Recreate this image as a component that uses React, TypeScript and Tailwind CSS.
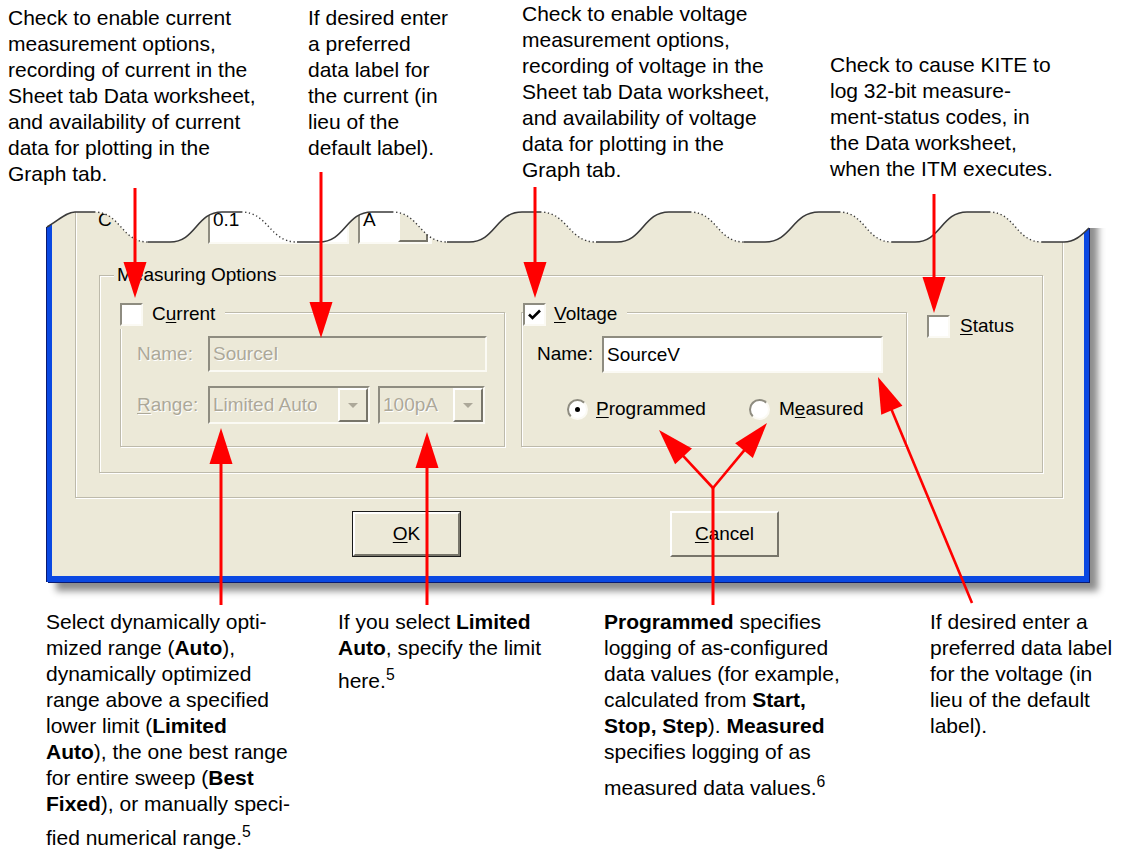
import React from "react";

const sunken =
  "border-2 border-t-[#8e8c80] border-l-[#8e8c80] border-b-[#fbfaf4] border-r-[#fbfaf4]";
const etched = "border border-[#bdbaab] shadow-[inset_1px_1px_0_#ffffff,1px_1px_0_#ffffff]";
const raised =
  "border-2 border-t-[#ffffff] border-l-[#ffffff] border-b-[#77756a] border-r-[#77756a]";
const dim = "text-[#aca899] [text-shadow:1px_1px_0_#ffffff]";

function Note({ className, children }: { className: string; children: React.ReactNode }) {
  return <div className={`whitespace-nowrap text-[21px] leading-[26px] ${className}`}>{children}</div>;
}

function Check({ on }: { on?: boolean }) {
  return (
    <div className={`w-[23px] h-[23px] bg-white flex items-center justify-center ${sunken}`}>
      {on && (
        <svg width="15" height="15" viewBox="0 0 15 15">
          <path d="M2 7.5 L5.5 11 L13 3.5" fill="none" stroke="#000" strokeWidth="2.6" />
        </svg>
      )}
    </div>
  );
}

function Radio({ on }: { on?: boolean }) {
  return (
    <div className={`w-[21px] h-[21px] rounded-full bg-white flex items-center justify-center ${sunken}`}>
      {on && <div className="w-[5px] h-[5px] rounded-full bg-black" />}
    </div>
  );
}

function DropButton({ arrow = true }: { arrow?: boolean }) {
  return (
    <div className={`w-[30px] h-full bg-[#ece9d8] flex items-center justify-center ${raised}`}>
      {arrow && (
        <div className="w-0 h-0 border-l-[5px] border-r-[5px] border-t-[5px] border-l-transparent border-r-transparent border-t-[#aca899]" />
      )}
    </div>
  );
}

function Combo({ value, className }: { value: string; className: string }) {
  return (
    <div className={`flex h-[38px] bg-[#ece9d8] ${sunken} ${className}`}>
      <div className={`flex-1 pl-[3px] text-[19px] leading-[34px] ${dim}`}>{value}</div>
      <DropButton />
    </div>
  );
}

function Arrow({ x1, y1, x2, y2, w = 3 }: { x1: number; y1: number; x2: number; y2: number; w?: number }) {
  const dx = x2 - x1;
  const dy = y2 - y1;
  const len = Math.hypot(dx, dy);
  const ux = dx / len;
  const uy = dy / len;
  const L = 36;
  const W = 11.5;
  const bx = x2 - ux * L;
  const by = y2 - uy * L;
  const px = -uy * W;
  const py = ux * W;
  return (
    <g>
      <line x1={x1} y1={y1} x2={bx + ux * 2} y2={by + uy * 2} stroke="#ff0000" strokeWidth={w} />
      <polygon points={`${x2},${y2} ${bx + px},${by + py} ${bx - px},${by - py}`} fill="#ff0000" />
    </g>
  );
}

const peaks: [number, number][] = [
  [75, 94], [222, 241], [372, 392], [522, 540], [669, 690], [819, 839], [967, 989],
];
const troughs: [number, number][] = [
  [148, 170], [297, 319], [447, 469], [596, 617], [744, 765], [892, 915], [1042, 1064],
];
const HI = 212;
const LO = 242;
const bend = (x1: number, y1: number, x2: number, y2: number) => {
  const m = (x1 + x2) / 2;
  return `C ${m} ${y1} ${m} ${y2} ${x2} ${y2}`;
};

function wavePaths() {
  let solid = "M 47 227 C 58 221 66 212 75 212";
  let dotted = "";
  let fill = "M 38 197 L 38 227 L 47 227 C 58 221 66 212 75 212";
  for (let i = 0; i < peaks.length; i++) {
    const pb = peaks[i][1];
    const [ta, tb] = troughs[i];
    solid += ` L ${pb} ${HI} M ${ta} ${LO} L ${tb} ${LO}`;
    dotted += ` M ${pb} ${HI} ${bend(pb, HI, ta, LO)}`;
    fill += ` L ${pb} ${HI} ${bend(pb, HI, ta, LO)} L ${tb} ${LO}`;
    if (i < peaks.length - 1) {
      const na = peaks[i + 1][0];
      solid += ` ${bend(tb, LO, na, HI)}`;
      fill += ` ${bend(tb, LO, na, HI)}`;
    }
  }
  solid += " C 1074 242 1081 236 1089 228";
  fill += " C 1074 242 1081 236 1089 228 L 1112 228 L 1112 197 Z";
  return { solid, dotted, fill };
}

export default function App() {
  const wave = wavePaths();
  return (
    <div className="relative w-[1124px] h-[850px] overflow-hidden bg-white text-black font-['Liberation_Sans',Arial,sans-serif]">
      {/* callouts above */}
      <div className="flex h-[200px]">
        <Note className="ml-[8px] mt-[5px] w-[270px]">
          Check to enable current
          <br />
          measurement options,
          <br />
          recording of current in the
          <br />
          Sheet tab Data worksheet,
          <br />
          and availability of current
          <br />
          data for plotting in the
          <br />
          Graph tab.
        </Note>
        <Note className="ml-[30px] mt-[5px] w-[190px]">
          If desired enter
          <br />
          a preferred
          <br />
          data label for
          <br />
          the current (in
          <br />
          lieu of the
          <br />
          default label).
        </Note>
        <Note className="ml-[24px] mt-[1px] w-[290px]">
          Check to enable voltage
          <br />
          measurement options,
          <br />
          recording of voltage in the
          <br />
          Sheet tab Data worksheet,
          <br />
          and availability of voltage
          <br />
          data for plotting in the
          <br />
          Graph tab.
        </Note>
        <Note className="ml-[18px] mt-[52px] w-[260px]">
          Check to cause KITE to
          <br />
          log 32-bit measure-
          <br />
          ment-status codes, in
          <br />
          the Data worksheet,
          <br />
          when the ITM executes.
        </Note>
      </div>

      {/* dialog fragment */}
      <div className="ml-[47px] w-[1042px] h-[382px] bg-[#ece9d8] border-l-[5px] border-r-[5px] border-b-[6px] border-[#0a48e2] shadow-[-1px_0_0_#0a1a70,1px_1px_0_#0a1a70,9px_9px_7px_rgba(0,0,0,0.45)] text-[19px]">
        <div className={`ml-[23px] w-[988px] h-[298px] border-t-0 ${etched}`}>
          {/* row cut by the torn edge */}
          <div className="flex h-[45px]">
            <div className="w-[132px] pl-[22px] pt-[9px] leading-[22px]">C</div>
            <div className="w-[141px] h-[44px] bg-white border-l-2 border-l-[#8e8c80] border-r-2 border-r-[#fbfaf4] border-b-2 border-b-[#fbfaf4] pl-[3px] pt-[9px] leading-[22px]">
              0.1
            </div>
            <div className="ml-[9px] w-[74px] h-[44px] flex bg-white border-l-2 border-l-[#8e8c80] border-r-2 border-r-[#fbfaf4] border-b-2 border-b-[#fbfaf4]">
              <div className="flex-1 pl-[3px] pt-[9px] leading-[22px]">A</div>
              <div className="w-[32px] h-full">
                <DropButton arrow={false} />
              </div>
            </div>
          </div>

          {/* Measuring Options */}
          <div className={`relative mt-[30px] ml-[23px] w-[944px] h-[198px] ${etched}`}>
            <div className="absolute -top-[12px] left-[14px] px-[3px] bg-[#ece9d8] leading-[22px]">
              Measuring Options
            </div>
            <div className="flex items-start pt-[36px] pl-[20px]">
              {/* Current */}
              <div className={`relative w-[385px] h-[135px] ${etched}`}>
                <div className="absolute -top-[13px] -left-[1px] flex items-center gap-[9px] pr-[10px] bg-[#ece9d8]">
                  <Check />
                  <span>
                    C<span className="underline underline-offset-2">u</span>rrent
                  </span>
                </div>
                <div className="pt-[23px] pl-[16px]">
                  <div className="flex items-center">
                    <div className={`w-[71px] ${dim}`}>Name:</div>
                    <div className={`w-[279px] h-[36px] bg-[#ece9d8] pl-[3px] leading-[32px] ${sunken} ${dim}`}>
                      SourceI
                    </div>
                  </div>
                  <div className="flex items-center mt-[14px]">
                    <div className={`w-[71px] ${dim}`}>
                      <span className="underline underline-offset-2">R</span>ange:
                    </div>
                    <Combo value="Limited Auto" className="w-[162px]" />
                    <Combo value="100pA" className="ml-[8px] w-[107px]" />
                  </div>
                </div>
              </div>

              {/* Voltage */}
              <div className={`relative ml-[16px] w-[386px] h-[135px] ${etched}`}>
                <div className="absolute -top-[13px] left-[1px] flex items-center gap-[8px] pr-[10px] bg-[#ece9d8]">
                  <Check on />
                  <span>
                    <span className="underline underline-offset-2">V</span>oltage
                  </span>
                </div>
                <div className="pt-[23px] pl-[15px]">
                  <div className="flex items-center">
                    <div className="w-[65px]">Name:</div>
                    <div className={`w-[281px] h-[37px] bg-white pl-[3px] leading-[33px] ${sunken}`}>SourceV</div>
                  </div>
                  <div className="flex items-center mt-[22px] pl-[30px]">
                    <div className="flex items-center w-[182px] gap-[8px]">
                      <Radio on />
                      <span>
                        <span className="underline underline-offset-2">P</span>rogrammed
                      </span>
                    </div>
                    <div className="flex items-center gap-[9px]">
                      <Radio />
                      <span>
                        M<span className="underline underline-offset-2">e</span>asured
                      </span>
                    </div>
                  </div>
                </div>
              </div>

              {/* Status */}
              <div className="ml-[20px] flex items-center gap-[10px]">
                <Check />
                <span>
                  <span className="underline underline-offset-2">S</span>tatus
                </span>
              </div>
            </div>
          </div>
        </div>

        {/* buttons */}
        <div className="flex mt-[13px]">
          <div className="ml-[300px] w-[109px] h-[46px] border border-[#1a1a1a]">
            <div className={`w-full h-full bg-[#ece9d8] flex items-center justify-center ${raised}`}>
              <span>
                <span className="underline underline-offset-2">O</span>K
              </span>
            </div>
          </div>
          <div className={`ml-[209px] w-[109px] h-[46px] bg-[#ece9d8] flex items-center justify-center ${raised}`}>
            <span>
              <span className="underline underline-offset-2">C</span>ancel
            </span>
          </div>
        </div>
      </div>

      {/* callouts below */}
      <div className="flex mt-[27px]">
        <Note className="ml-[46px] w-[260px]">
          Select dynamically opti-
          <br />
          mized range (<b>Auto</b>),
          <br />
          dynamically optimized
          <br />
          range above a specified
          <br />
          lower limit (<b>Limited</b>
          <br />
          <b>Auto</b>), the one best range
          <br />
          for entire sweep (<b>Best</b>
          <br />
          <b>Fixed</b>), or manually speci-
          <div className="pt-[8px]">
            fied numerical range.<sup>5</sup>
          </div>
        </Note>
        <Note className="ml-[32px] w-[240px]">
          If you select <b>Limited</b>
          <br />
          <b>Auto</b>, specify the limit
          <div className="pt-[7px]">
            here.<sup>5</sup>
          </div>
        </Note>
        <Note className="ml-[26px] w-[300px]">
          <b>Programmed</b> specifies
          <br />
          logging of as-configured
          <br />
          data values (for example,
          <br />
          calculated from <b>Start,</b>
          <br />
          <b>Stop, Step</b>). <b>Measured</b>
          <br />
          specifies logging of as
          <div className="pt-[10px]">
            measured data values.<sup>6</sup>
          </div>
        </Note>
        <Note className="ml-[26px] w-[190px]">
          If desired enter a
          <br />
          preferred data label
          <br />
          for the voltage (in
          <br />
          lieu of the default
          <br />
          label).
        </Note>
      </div>

      {/* torn edge and callout arrows */}
      <svg className="absolute left-0 top-0 pointer-events-none" width="1124" height="850" viewBox="0 0 1124 850">
        <path d={wave.fill} fill="#ffffff" />
        <path d={wave.solid} fill="none" stroke="#3a3a3a" strokeWidth="1.6" />
        <path d={wave.dotted} fill="none" stroke="#3a3a3a" strokeWidth="1.4" strokeDasharray="1.3 2.6" />

        <Arrow x1={135} y1={188} x2={135} y2={298} />
        <Arrow x1={321} y1={172} x2={321} y2={338} />
        <Arrow x1={535} y1={187} x2={535} y2={298} />
        <Arrow x1={934} y1={194} x2={934} y2={313} />
        <Arrow x1={221} y1={605} x2={221} y2={428} />
        <Arrow x1={427} y1={605} x2={427} y2={432} />
        <line x1={713} y1={605} x2={713} y2={486} stroke="#ff0000" strokeWidth={3} />
        <Arrow x1={713} y1={488} x2={659} y2={430} w={2.6} />
        <Arrow x1={713} y1={488} x2={767} y2={423} w={2.6} />
        <Arrow x1={972} y1={603} x2={878} y2={377} w={2.6} />
      </svg>
    </div>
  );
}
